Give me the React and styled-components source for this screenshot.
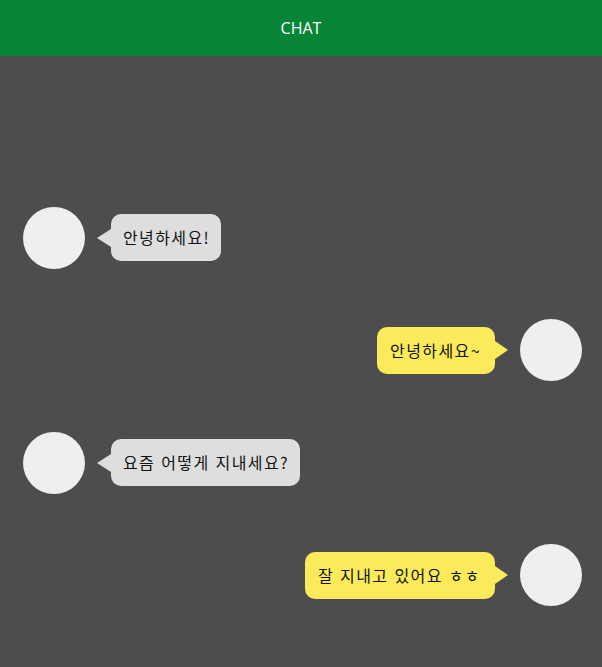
import React from "react";
import styled, { createGlobalStyle } from "styled-components";

const Global = createGlobalStyle`
  html, body { margin: 0; padding: 0; background: #4c4d4f; }
  body { font-family: "Open Sans", "Noto Sans CJK KR", sans-serif; }
`;

const Page = styled.div`
  display: flex;
  flex-direction: column;
  min-height: 100vh;
  background: #4c4d4f;
`;

const Header = styled.header`
  height: 56px;
  flex-shrink: 0;
  background: #068537;
  color: #ffffff;
  display: flex;
  align-items: center;
  justify-content: center;
  font-family: "Open Sans", sans-serif;
  font-size: 16px;
`;

const Messages = styled.main`
  flex: 1;
  display: flex;
  flex-direction: column;
  justify-content: flex-end;
  gap: 50.5px;
  padding: 0 20px 61px 23px;
`;

const Row = styled.div`
  display: flex;
  align-items: center;
  flex-direction: ${(p) => (p.$mine ? "row-reverse" : "row")};
  gap: 12px;
`;

const Avatar = styled.div`
  width: 62px;
  height: 62px;
  border-radius: 50%;
  background: #efefef;
  flex-shrink: 0;
`;

const Bubble = styled.div`
  position: relative;
  background: ${(p) => (p.$mine ? "#fbea59" : "#dedede")};
  color: #111;
  font-family: "Noto Sans CJK KR", "Open Sans", sans-serif;
  font-size: 16px;
  letter-spacing: 1.4px;
  word-spacing: 1px;
  line-height: 23px;
  padding: 12px ${(p) => (p.$mine ? 14 : 11)}px 12px ${(p) => (p.$mine ? 13 : 12)}px;
  border-radius: 10px;
  margin-${(p) => (p.$mine ? "right" : "left")}: ${(p) => (p.$mine ? 13 : 14)}px;

  &::before {
    content: "";
    position: absolute;
    top: 50%;
    transform: translateY(-50%);
    ${(p) => (p.$mine ? "right: -13px;" : "left: -14px;")}
    border-top: 9px solid transparent;
    border-bottom: 9px solid transparent;
    ${(p) =>
      p.$mine
        ? "border-left: 13px solid #fbea59;"
        : "border-right: 14px solid #dedede;"}
  }
`;

const messages = [
  { mine: false, text: "안녕하세요!" },
  { mine: true, text: "안녕하세요~" },
  { mine: false, text: "요즘 어떻게 지내세요?" },
  { mine: true, text: "잘 지내고 있어요 ㅎㅎ" },
];

export default function App() {
  return (
    <Page>
      <Global />
      <Header>CHAT</Header>
      <Messages>
        {messages.map((m, i) => (
          <Row key={i} $mine={m.mine}>
            <Avatar />
            <Bubble $mine={m.mine}>{m.text}</Bubble>
          </Row>
        ))}
      </Messages>
    </Page>
  );
}
